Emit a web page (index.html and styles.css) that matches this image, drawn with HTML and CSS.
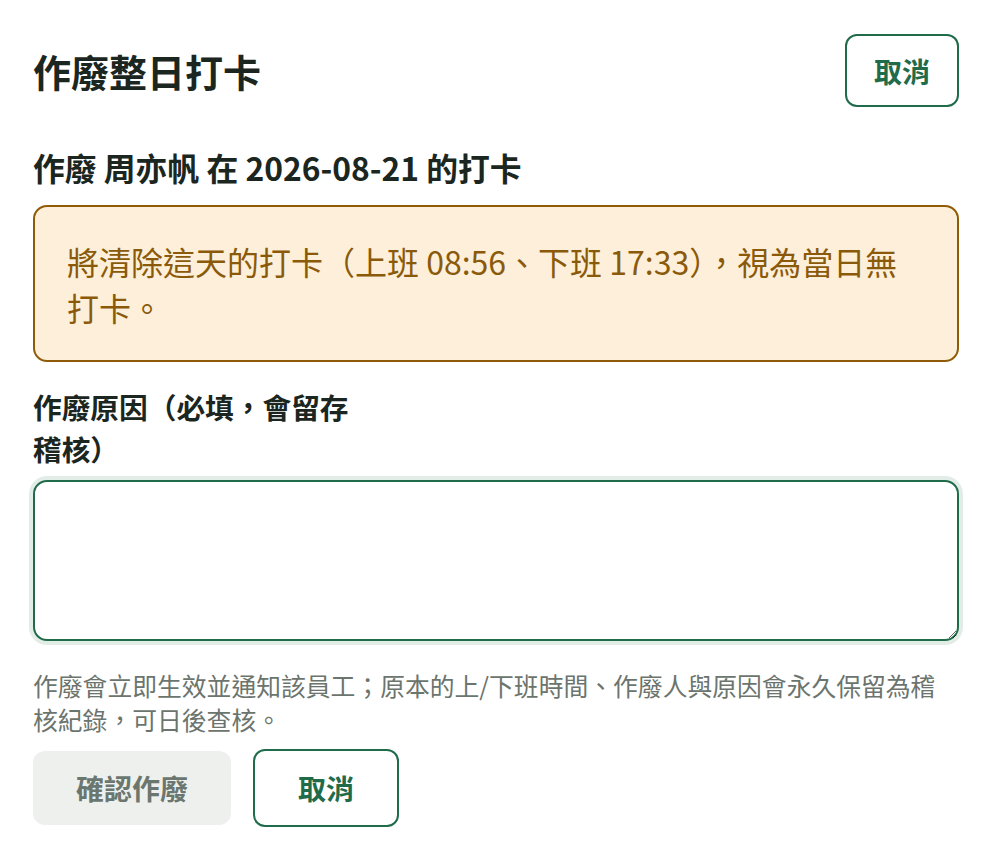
FILE: index.html
```html
<!DOCTYPE html>
<html lang="zh-Hant">
<head>
<meta charset="utf-8">
<title>作廢整日打卡</title>
<link rel="stylesheet" href="styles.css">
</head>
<body>
<div class="page">
  <header class="header">
    <h1 class="title">作廢整日打卡</h1>
    <button class="btn btn-outline btn-small" type="button">取消</button>
  </header>
  <h2 class="subtitle">作廢 周亦帆 在 2026-08-21 的打卡</h2>
  <div class="warning">將清除這天的打卡（上班 08:56、下班 17:33），視為當日無打卡。</div>
  <label class="field-label" for="reason">作廢原因（必填，會留存稽核）</label>
  <textarea id="reason" class="reason"></textarea>
  <p class="hint">作廢會立即生效並通知該員工；原本的上/下班時間、作廢人與原因會永久保留為稽核紀錄，可日後查核。</p>
  <div class="actions">
    <button class="btn btn-disabled" type="button">確認作廢</button>
    <button class="btn btn-outline" type="button">取消</button>
  </div>
</div>
</body>
</html>
```
FILE: styles.css
```css
* { box-sizing: border-box; }
html, body { margin: 0; padding: 0; background: #ffffff; }
body {
  font-family: "Noto Sans CJK TC", "Noto Sans", sans-serif;
  color: #1b2620;
}
.page {
  padding: 34px 33px 0 33px;
}
.header {
  display: flex;
  justify-content: space-between;
  align-items: center;
}
.title {
  margin: 0;
  font-size: 38px;
  font-weight: 700;
  line-height: 1.2;
  color: #1b2620;
}
.btn {
  font-family: inherit;
  font-size: 28px;
  font-weight: 700;
  line-height: 42px;
  border-radius: 12px;
  cursor: pointer;
}
.btn-outline {
  background: #ffffff;
  color: #1f6b4a;
  border: 2px solid #1f6b4a;
  padding: 16px 43px;
}
.btn-small {
  padding: 13.5px 27px;
}
.btn-disabled {
  background: #eef0ee;
  color: #6b776e;
  border: none;
  padding: 16px 43px;
}
.subtitle {
  margin: 36px 0 14px 0;
  font-size: 31.8px;
  font-weight: 700;
  line-height: 48px;
  color: #1b2620;
}
.warning {
  background: #fdefd9;
  border: 2px solid #8f5b06;
  border-radius: 14px;
  padding: 30.5px 32px;
  font-size: 32px;
  line-height: 46px;
  color: #8a5a0a;
}
.field-label {
  display: block;
  margin-top: 24px;
  max-width: 340px;
  font-size: 28.7px;
  font-weight: 700;
  line-height: 42px;
  color: #1b2620;
}
.reason {
  display: block;
  width: 100%;
  height: 161px;
  margin-top: 10px;
  border: 2px solid #1f6b4a;
  border-radius: 14px;
  box-shadow: 0 0 0 4px #e3ede8;
  outline: none;
  font-family: inherit;
  font-size: 24px;
  padding: 12px 16px;
  resize: vertical;
}
.hint {
  margin: 28px 0 0 0;
  font-size: 24.8px;
  line-height: 33.5px;
  color: #6b746d;
}
.actions {
  display: flex;
  align-items: center;
  gap: 22px;
  margin-top: 13px;
}
```
